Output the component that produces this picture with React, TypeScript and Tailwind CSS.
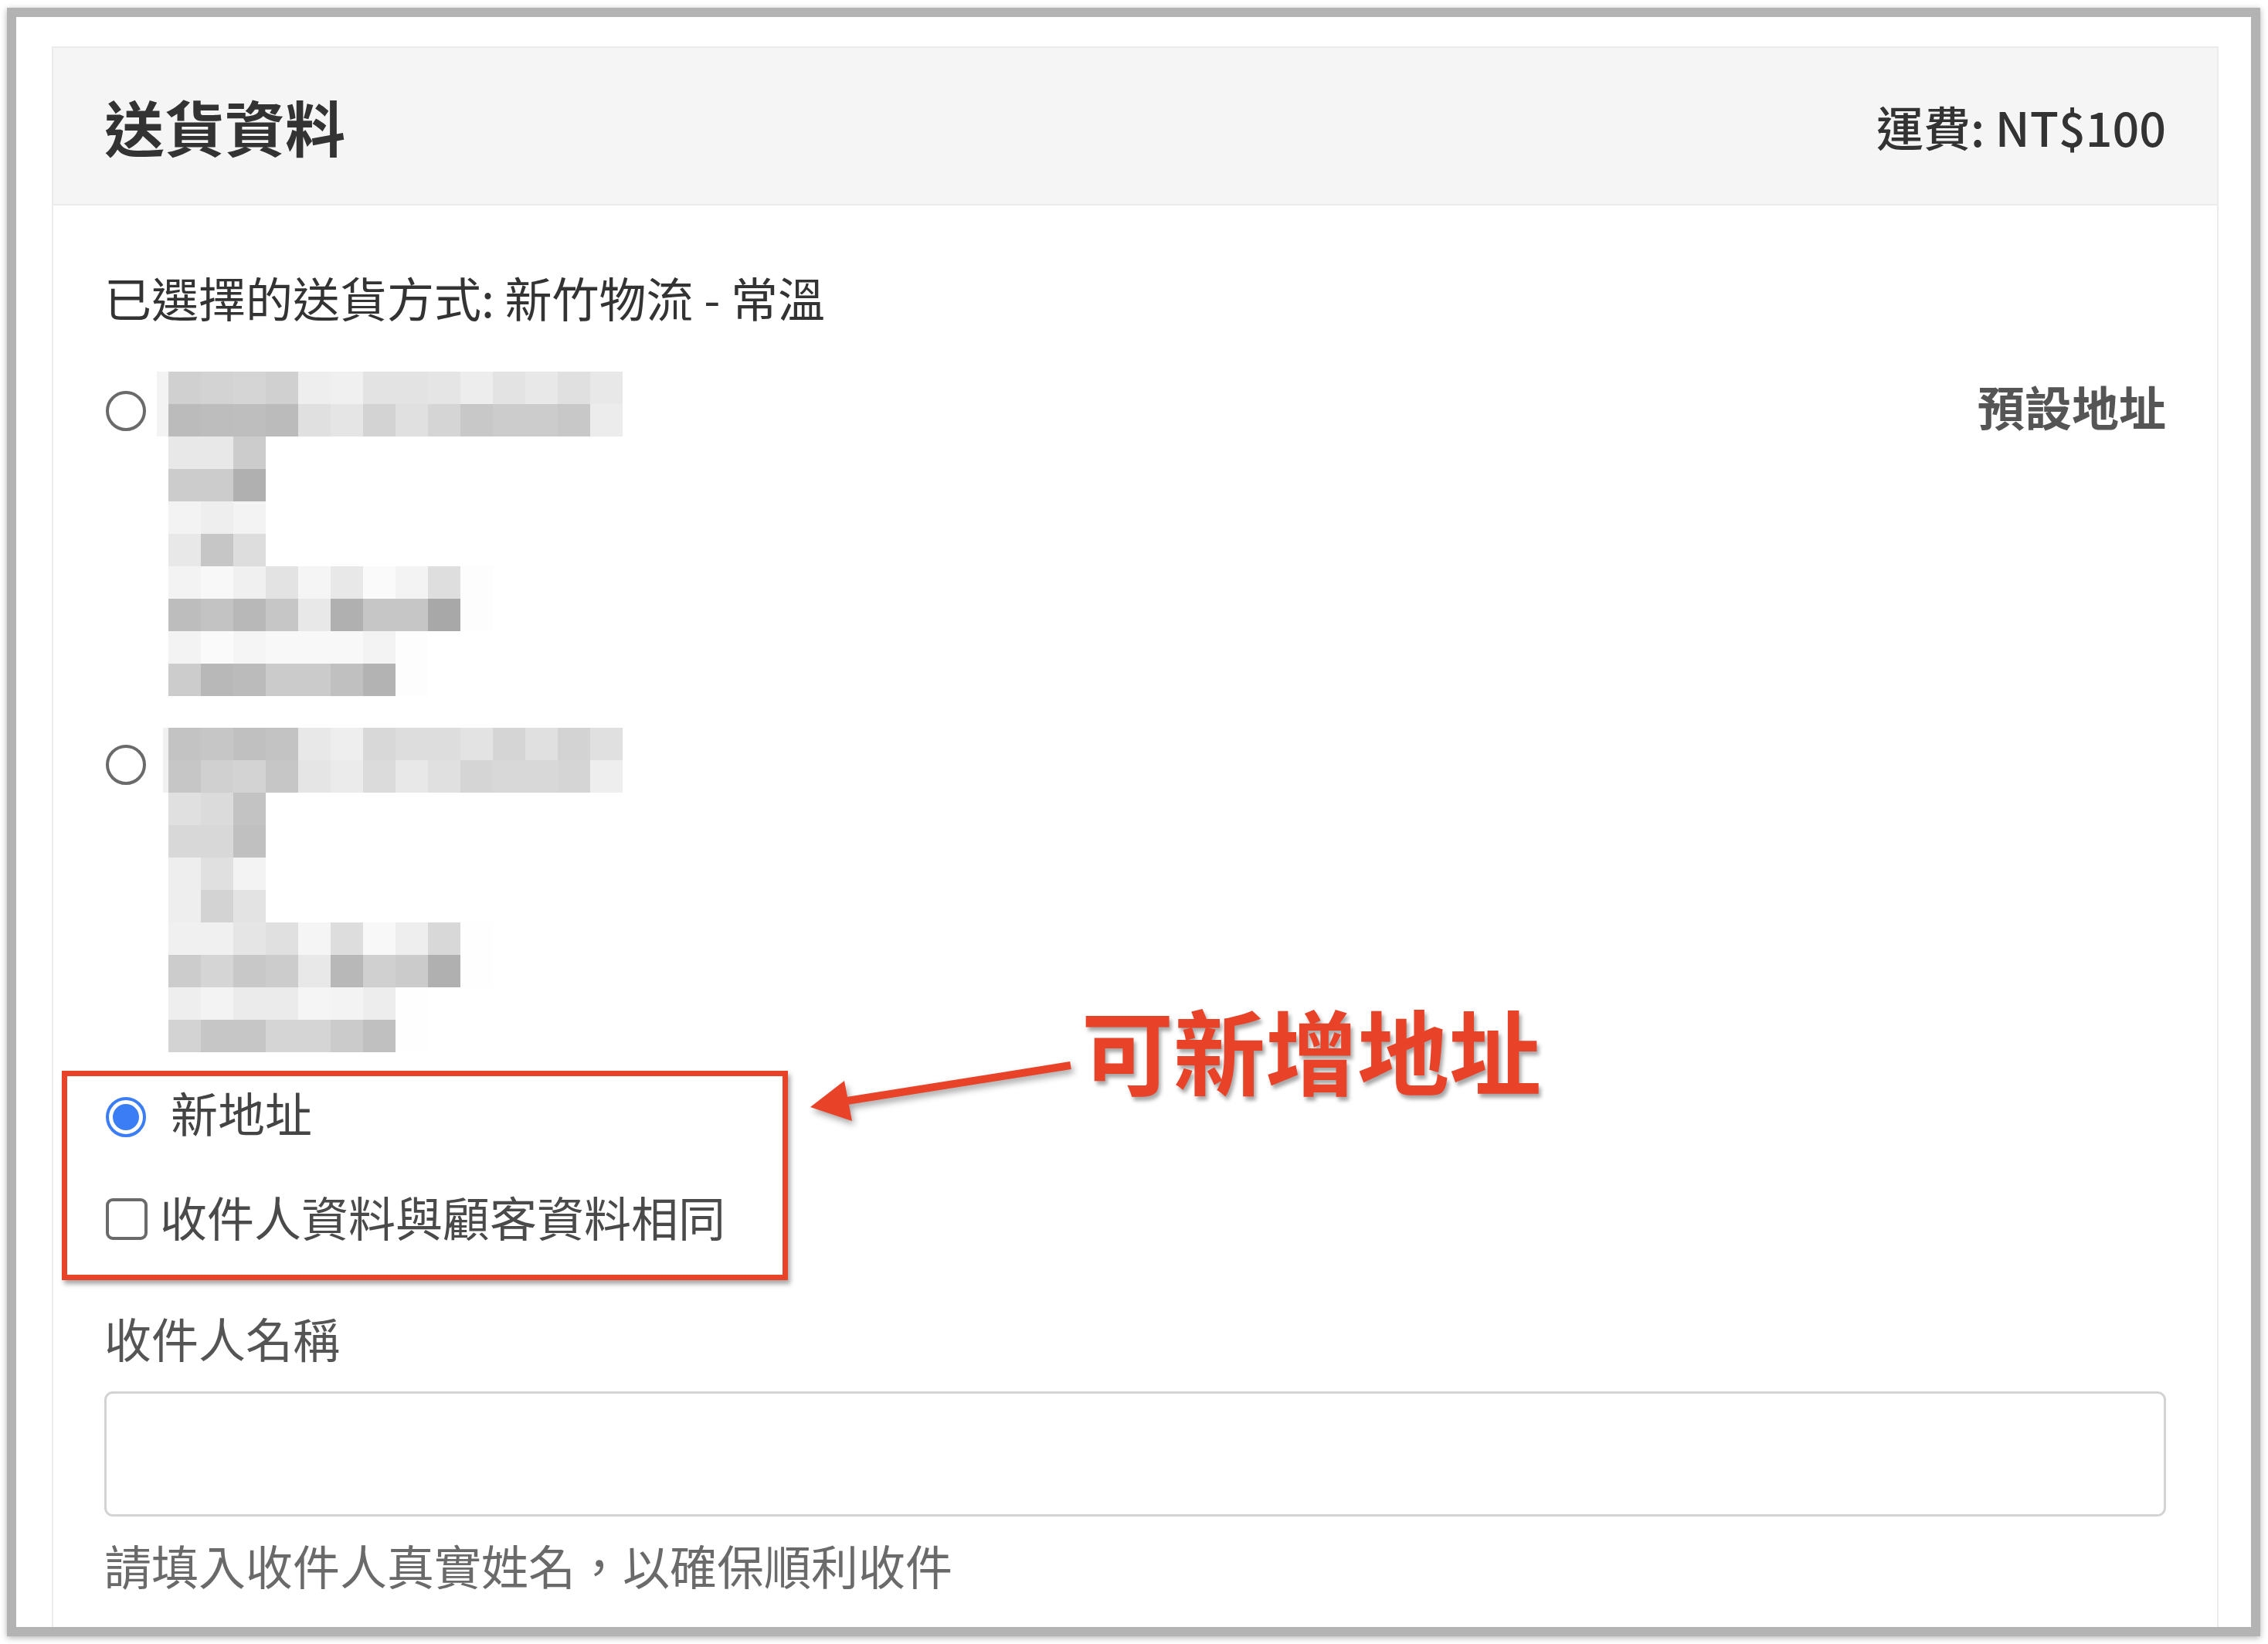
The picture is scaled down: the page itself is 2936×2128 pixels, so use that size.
import React from "react";

type Line = { lead?: string; leadW?: number; a: string[]; b: string[] };

const block1: Line[] = [
  {
    lead: "#f3f3f3",
    leadW: 15,
    a: ["#d0d0d0", "#d3d3d3", "#d5d5d5", "#d0d0d0", "#eeeeee", "#f0f0f0", "#e3e3e3", "#e3e3e3", "#e5e5e5", "#ededed", "#e3e3e3", "#e8e8e8", "#e0e0e0", "#e8e8e8"],
    b: ["#bbbbbb", "#bdbdbd", "#bebebe", "#bbbbbb", "#e0e0e0", "#e5e5e5", "#d3d3d3", "#e0e0e0", "#d5d5d5", "#c8c8c8", "#cccccc", "#cccccc", "#c8c8c8", "#ececec"],
  },
  { a: ["#e8e8e8", "#e8e8e8", "#cccccc"], b: ["#cccccc", "#cccccc", "#b0b0b0"] },
  { a: ["#f3f3f3", "#eeeeee", "#f3f3f3"], b: ["#e8e8e8", "#c6c6c6", "#dddddd"] },
  {
    a: ["#f3f3f3", "#f8f8f8", "#f0f0f0", "#e3e3e3", "#f5f5f5", "#e8e8e8", "#fafafa", "#f3f3f3", "#dedede", "#fdfdfd"],
    b: ["#bdbdbd", "#c3c3c3", "#b8b8b8", "#c6c6c6", "#e8e8e8", "#b0b0b0", "#c6c6c6", "#c6c6c6", "#a8a8a8", "#fdfdfd"],
  },
  {
    a: ["#f3f3f3", "#fafafa", "#f5f5f5", "#f8f8f8", "#f8f8f8", "#f8f8f8", "#f3f3f3", "#fdfdfd"],
    b: ["#cccccc", "#b8b8b8", "#bbbbbb", "#cbcbcb", "#cbcbcb", "#c0c0c0", "#b3b3b3", "#fdfdfd"],
  },
];

const block2: Line[] = [
  {
    lead: "#f0f0f0",
    leadW: 7,
    a: ["#c3c3c3", "#c6c6c6", "#c0c0c0", "#c3c3c3", "#e8e8e8", "#eeeeee", "#d8d8d8", "#dddddd", "#dddddd", "#e3e3e3", "#d5d5d5", "#e0e0e0", "#d3d3d3", "#e0e0e0"],
    b: ["#c6c6c6", "#d0d0d0", "#d3d3d3", "#c6c6c6", "#e5e5e5", "#ebebeb", "#dbdbdb", "#e8e8e8", "#e0e0e0", "#d5d5d5", "#d8d8d8", "#d8d8d8", "#d5d5d5", "#eeeeee"],
  },
  { a: ["#e0e0e0", "#dbdbdb", "#c3c3c3"], b: ["#d8d8d8", "#d8d8d8", "#c0c0c0"] },
  { a: ["#eeeeee", "#e0e0e0", "#f3f3f3"], b: ["#eeeeee", "#d3d3d3", "#e3e3e3"] },
  {
    a: ["#f0f0f0", "#f0f0f0", "#e5e5e5", "#e0e0e0", "#f5f5f5", "#dddddd", "#f8f8f8", "#eeeeee", "#d8d8d8", "#fefefe"],
    b: ["#cccccc", "#d5d5d5", "#c8c8c8", "#cccccc", "#e8e8e8", "#b8b8b8", "#d0d0d0", "#cbcbcb", "#b0b0b0", "#fefefe"],
  },
  {
    a: ["#eeeeee", "#f3f3f3", "#ebebeb", "#ebebeb", "#f5f5f5", "#f3f3f3", "#ededed", "#fefefe"],
    b: ["#d3d3d3", "#c6c6c6", "#c6c6c6", "#d5d5d5", "#d5d5d5", "#cbcbcb", "#c0c0c0", "#fefefe"],
  },
];

function CellRow({ cells, lead, leadW }: { cells: string[]; lead?: string; leadW?: number }) {
  return (
    <div className="flex h-[42px]">
      <div className="flex h-[42px] w-[15px] justify-end">
        {lead ? <div className="h-[42px]" style={{ width: leadW, backgroundColor: lead }} /> : null}
      </div>
      {cells.map((c, i) => (
        <div key={i} className="h-[42px] w-[42px]" style={{ backgroundColor: c }} />
      ))}
    </div>
  );
}

function Mosaic({ lines }: { lines: Line[] }) {
  return (
    <div className="flex flex-col">
      {lines.map((l, i) => (
        <div key={i} className="flex flex-col">
          <CellRow cells={l.a} lead={l.lead} leadW={l.leadW} />
          <CellRow cells={l.b} lead={l.lead} leadW={l.leadW} />
        </div>
      ))}
    </div>
  );
}

function Radio() {
  return <div className="h-[52px] w-[52px] shrink-0 rounded-full border-[4px] border-[#6a6a6a] bg-white" />;
}

export default function App() {
  return (
    <div className="relative h-[2128px] w-[2936px] overflow-hidden bg-white font-['Noto_Sans_CJK_TC','Noto_Sans',sans-serif]">
      {/* screenshot frame */}
      <div className="ml-[9px] mt-[10px] h-[2108px] w-[2917px] overflow-hidden border-[12px] border-[#b3b3b3] bg-white shadow-[0_2px_8px_rgba(0,0,0,0.3)]">
        <div className="ml-[46px] mt-[38px] w-[2805px] border-2 border-[#ebebeb] bg-white">
          {/* header */}
          <div className="flex h-[204px] items-center justify-between border-b-2 border-[#ebebeb] bg-[#f5f5f5] px-[66px]">
            <div className="text-[78px] font-bold leading-none text-[#333333]">送貨資料</div>
            <div className="text-[61px] font-medium leading-none text-[#333333]">運費: NT$100</div>
          </div>

          {/* body */}
          <div className="px-[66px] pb-[200px] pt-[77px] text-[61px] leading-[84px]">
            <div className="h-[84px] text-[#333333]">已選擇的送貨方式: 新竹物流 - 常溫</div>

            {/* address 1 */}
            <div className="mt-[54px] flex h-[420px] items-start">
              <div className="ml-[2px] mt-[25px]">
                <Radio />
              </div>
              <div className="ml-[14px]">
                <Mosaic lines={block1} />
              </div>
              <div className="ml-auto pt-[3px] font-bold text-[#555555]">預設地址</div>
            </div>

            {/* address 2 */}
            <div className="mt-[41px] flex h-[420px] items-start">
              <div className="ml-[2px] mt-[22px]">
                <Radio />
              </div>
              <div className="ml-[14px]">
                <Mosaic lines={block2} />
              </div>
            </div>

            {/* new address */}
            <div className="mt-[40px] flex h-[84px] items-center">
              <div className="ml-[2px] mt-[4px] flex h-[52px] w-[52px] shrink-0 items-center justify-center rounded-full border-[4px] border-[#3a7df5] bg-white p-[5px]">
                <div className="h-full w-full rounded-full bg-[#3a7df5]" />
              </div>
              <div className="ml-[32px] pb-[8px] text-[#444444]">新地址</div>
            </div>

            {/* same as customer */}
            <div className="mt-[50px] flex h-[84px] items-center">
              <div className="ml-[2px] h-[54px] w-[54px] shrink-0 rounded-[9px] border-[4px] border-[#6a6a6a] bg-white" />
              <div className="ml-[16px] pb-[6px] text-[#4a4a4a]">收件人資料與顧客資料相同</div>
            </div>

            {/* recipient name */}
            <div className="mt-[70px] h-[84px] text-[#555555]">收件人名稱</div>
            <div className="mt-[27px] h-[162px] w-full rounded-[11px] border-[3px] border-[#d3d3d3] bg-white" />
            <div className="mt-[21px] h-[84px] text-[#6a6a6a]">請填入收件人真實姓名，以確保順利收件</div>
          </div>
        </div>
      </div>

      {/* annotation: red box */}
      <div className="absolute left-[80px] top-[1386px] h-[271px] w-[940px] border-[7px] border-[#e84329] shadow-[3px_5px_6px_rgba(0,0,0,0.35)]" />

      {/* annotation: arrow */}
      <svg
        className="pointer-events-none absolute left-0 top-0 drop-shadow-[3px_5px_4px_rgba(0,0,0,0.35)]"
        width="2936"
        height="2128"
        viewBox="0 0 2936 2128"
      >
        <line x1="1386" y1="1379" x2="1090" y2="1426" stroke="#e84329" strokeWidth="10" />
        <polygon points="1049,1433 1093,1399 1103,1451" fill="#e84329" />
      </svg>

      {/* annotation: text */}
      <div className="absolute left-[1400px] top-[1298px] text-[119px] font-bold leading-none text-[#e84329] [text-shadow:3px_5px_5px_rgba(0,0,0,0.35)]">
        可新增地址
      </div>
    </div>
  );
}
